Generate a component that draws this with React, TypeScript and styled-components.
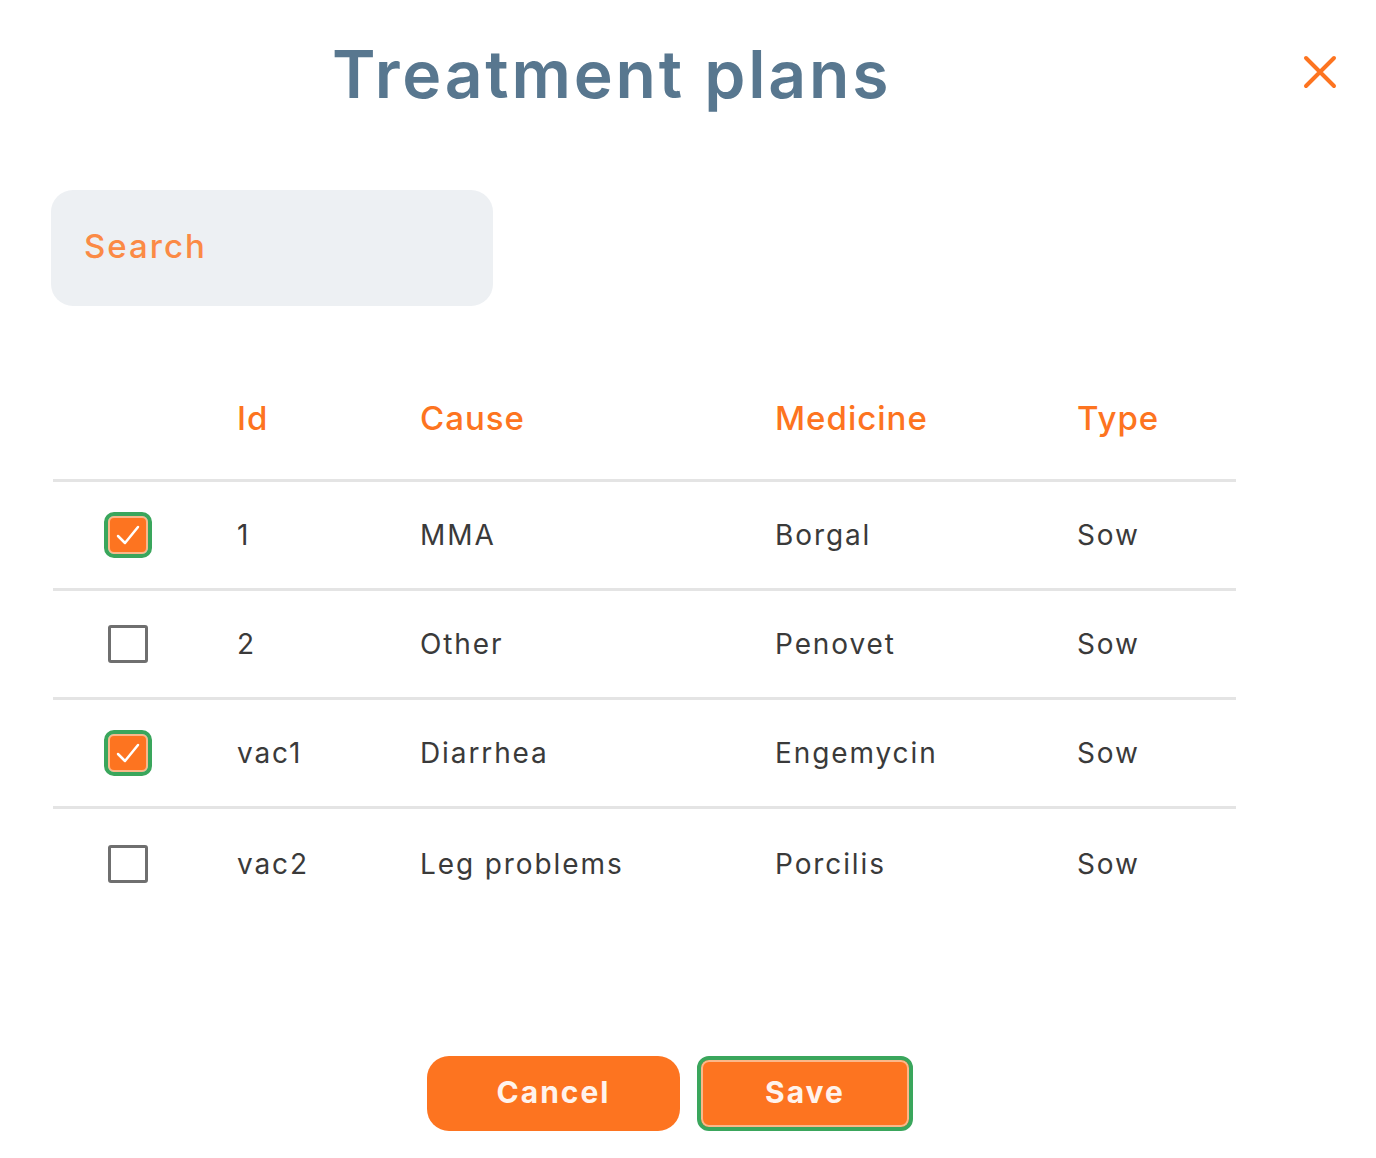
import React, { useState } from "react";
import styled, { createGlobalStyle } from "styled-components";

const GlobalStyle = createGlobalStyle`
  html, body { margin: 0; padding: 0; background: #ffffff; }
  body { font-family: "Inter", "Noto Sans", sans-serif; }
  * { box-sizing: border-box; }
`;

const ORANGE = "#fd7420";
const GREEN = "#3aa65c";

const Page = styled.div`
  width: 1376px;
  min-height: 1158px;
  display: flex;
  flex-direction: column;
  padding: 34px 0 0 0;
`;

const Header = styled.div`
  display: flex;
  align-items: flex-start;
  justify-content: space-between;
  padding: 0 36px 0 332px;
`;

const Title = styled.h1`
  margin: 0;
  font-family: "Inter", sans-serif;
  font-weight: 600;
  font-size: 66px;
  line-height: 80px;
  color: #58778f;
  letter-spacing: 2.8px;
`;

const CloseButton = styled.button`
  width: 40px;
  height: 40px;
  margin-top: 18px;
  padding: 0;
  border: none;
  background: transparent;
  display: flex;
  align-items: center;
  justify-content: center;
  cursor: pointer;
`;

const SearchBox = styled.input`
  margin: 76px 0 0 51px;
  width: 442px;
  height: 116px;
  border: none;
  border-radius: 22px;
  background: #edf0f3;
  padding: 0 0 4px 33px;
  font-family: "Inter", sans-serif;
  font-size: 33px;
  font-weight: 500;
  letter-spacing: 2px;
  color: #333;
  outline: none;
  &::placeholder { color: #fb8a45; }
`;

const Table = styled.div`
  margin: 53px 0 0 53px;
  width: 1183px;
  display: flex;
  flex-direction: column;
`;

const Row = styled.div<{ $head?: boolean; $last?: boolean }>`
  display: grid;
  grid-template-columns: 184px 183px 355px 302px 1fr;
  align-items: center;
  height: ${(p) => (p.$head ? "123px" : "109px")};
  border-bottom: ${(p) => (p.$last ? "none" : "3px solid #e4e4e4")};
`;

const HeadCell = styled.div`
  font-family: "Inter", sans-serif;
  font-size: 33px;
  font-weight: 500;
  letter-spacing: 1px;
  color: ${ORANGE};
  padding-bottom: 2px;
`;

const Cell = styled.div`
  font-family: "Inter", sans-serif;
  font-size: 28px;
  font-weight: 400;
  letter-spacing: 1.9px;
  color: #3a3a3a;
`;

const CheckCell = styled.div`
  display: flex;
  align-items: center;
  padding-left: 55px;
`;

const Box = styled.button<{ $checked: boolean }>`
  width: 40px;
  height: 38px;
  padding: 0;
  display: flex;
  align-items: center;
  justify-content: center;
  border-radius: ${(p) => (p.$checked ? "6px" : "3px")};
  border: ${(p) => (p.$checked ? "2px solid #fbb789" : "3px solid #6f6f6f")};
  background: ${(p) => (p.$checked ? ORANGE : "#ffffff")};
  outline: ${(p) => (p.$checked ? `4px solid ${GREEN}` : "none")};
  outline-offset: 0;
  cursor: pointer;
`;

const Footer = styled.div`
  display: flex;
  gap: 17px;
  padding: 138px 0 0 427px;
`;

const Button = styled.button<{ $focused?: boolean }>`
  height: 75px;
  width: ${(p) => (p.$focused ? "216px" : "253px")};
  border: ${(p) => (p.$focused ? `4px solid ${GREEN}` : "none")};
  border-radius: ${(p) => (p.$focused ? "12px" : "22px")};
  background: ${ORANGE};
  color: #fff3ec;
  font-family: "Inter", sans-serif;
  font-weight: 700;
  font-size: 30px;
  letter-spacing: 2px;
  padding: 0 0 3px 0;
  cursor: pointer;
  box-shadow: ${(p) => (p.$focused ? "inset 0 0 0 2px #fbb789" : "none")};
`;

type Plan = { id: string; cause: string; medicine: string; type: string };

const plans: Plan[] = [
  { id: "1", cause: "MMA", medicine: "Borgal", type: "Sow" },
  { id: "2", cause: "Other", medicine: "Penovet", type: "Sow" },
  { id: "vac1", cause: "Diarrhea", medicine: "Engemycin", type: "Sow" },
  { id: "vac2", cause: "Leg problems", medicine: "Porcilis", type: "Sow" },
];

const Check = () => (
  <svg width="28" height="24" viewBox="0 0 28 24" fill="none">
    <path d="M4 13 L11 20 L24 4" stroke="#ffffff" strokeWidth="2.5" strokeLinecap="round" strokeLinejoin="round" />
  </svg>
);

export default function App() {
  const [checked, setChecked] = useState<Record<string, boolean>>({ "1": true, vac1: true });
  return (
    <>
      <GlobalStyle />
      <Page>
        <Header>
          <Title>Treatment plans</Title>
          <CloseButton aria-label="Close">
            <svg width="34" height="34" viewBox="0 0 34 34">
              <path d="M3 3 L31 31 M31 3 L3 31" stroke={ORANGE} strokeWidth="4" strokeLinecap="round" />
            </svg>
          </CloseButton>
        </Header>
        <SearchBox placeholder="Search" />
        <Table>
          <Row $head>
            <div />
            <HeadCell>Id</HeadCell>
            <HeadCell>Cause</HeadCell>
            <HeadCell>Medicine</HeadCell>
            <HeadCell>Type</HeadCell>
          </Row>
          {plans.map((p, i) => (
            <Row key={p.id} $last={i === plans.length - 1}>
              <CheckCell>
                <Box
                  $checked={!!checked[p.id]}
                  onClick={() => setChecked((c) => ({ ...c, [p.id]: !c[p.id] }))}
                >
                  {checked[p.id] && <Check />}
                </Box>
              </CheckCell>
              <Cell>{p.id}</Cell>
              <Cell>{p.cause}</Cell>
              <Cell>{p.medicine}</Cell>
              <Cell>{p.type}</Cell>
            </Row>
          ))}
        </Table>
        <Footer>
          <Button>Cancel</Button>
          <Button $focused>Save</Button>
        </Footer>
      </Page>
    </>
  );
}
